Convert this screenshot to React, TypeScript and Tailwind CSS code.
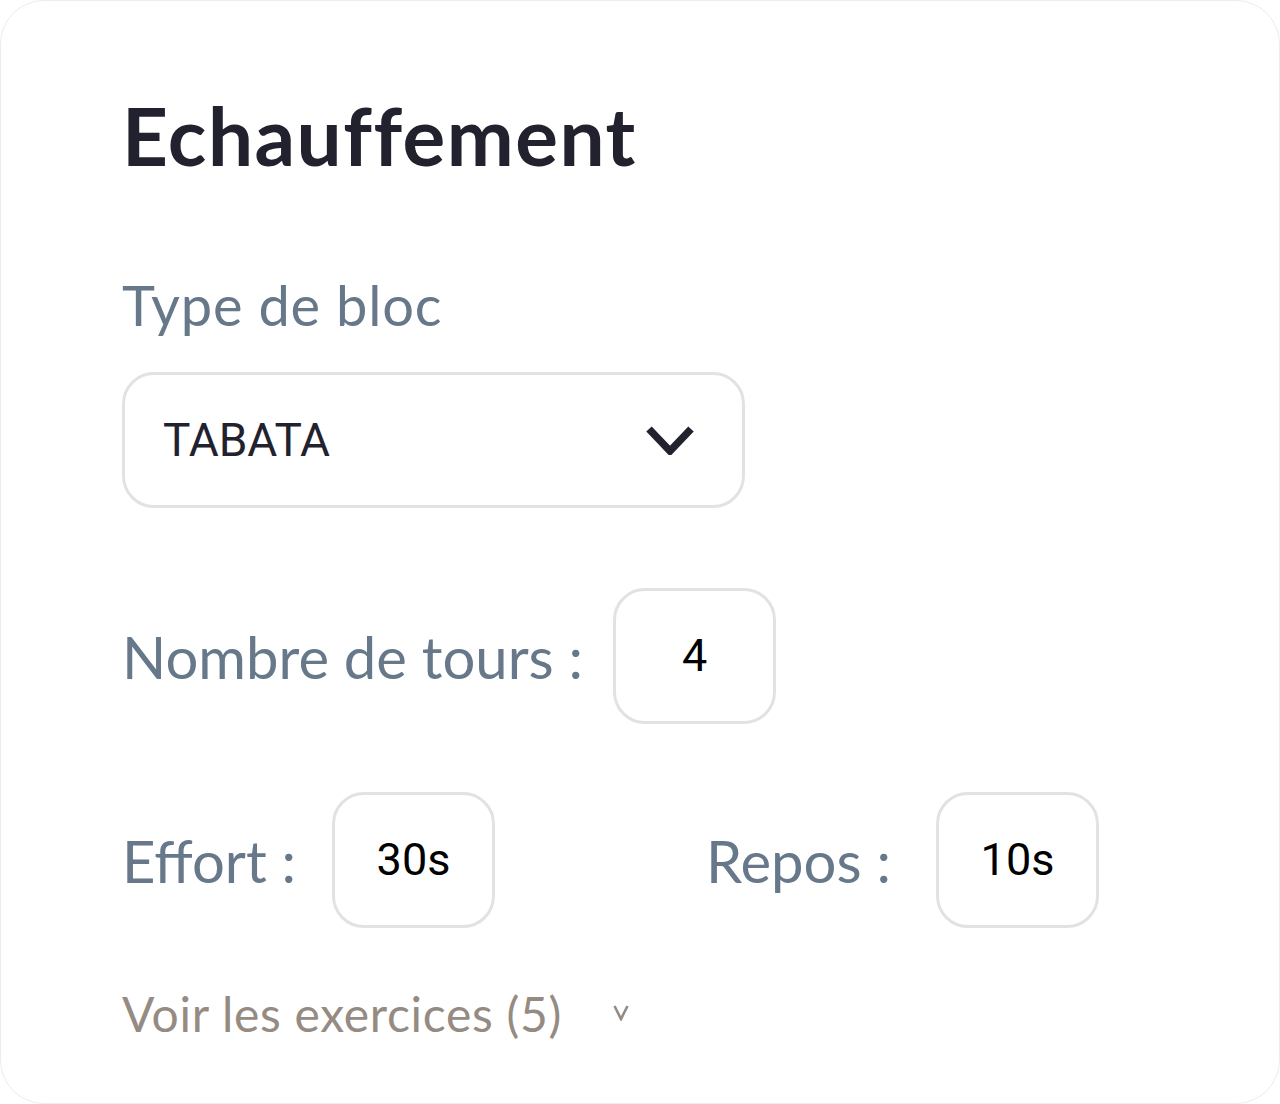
function Chevron({ className, stroke }: { className: string; stroke: number }) {
  return (
    <svg viewBox="0 0 48 30" className={className} fill="none">
      <path d="M3 4 L24 26 L45 4" stroke="currentColor" strokeWidth={stroke} strokeLinecap="butt" strokeLinejoin="miter" />
    </svg>
  );
}

function ValueBox({ value }: { value: string }) {
  return (
    <div className="flex h-[136px] w-[163px] items-center justify-center rounded-[32px] border-[3px] border-[#e2e2e2] bg-white font-['Roboto',sans-serif] text-[45px] text-black">
      {value}
    </div>
  );
}

export default function App() {
  return (
    <div className="h-[1104px] w-[1280px] bg-white">
      <div className="h-full w-full rounded-[44px] border border-[#ececec] bg-white pl-[121px] pt-[94px] font-['Lato',sans-serif]">
        <h1 className="text-[80px] font-bold leading-[80px] tracking-[1.5px] text-[#22222f]">Echauffement</h1>

        <p className="mt-[100px] text-[56px] leading-[60px] tracking-[0.8px] text-[#66788a]">Type de bloc</p>

        <div className="mt-[37px] flex h-[136px] w-[623px] items-center justify-between rounded-[32px] border-[3px] border-[#e2e2e2] pl-[38px] pr-[48px]">
          <span className="font-['Roboto',sans-serif] text-[46px] text-[#22222f]">TABATA</span>
          <Chevron className="h-[30px] w-[48px] text-[#22222f]" stroke={7.5} />
        </div>

        <div className="mt-[80px] flex items-center gap-[30px]">
          <span className="text-[58px] text-[#66788a]">Nombre de tours :</span>
          <ValueBox value="4" />
        </div>

        <div className="mt-[68px] flex items-center">
          <span className="w-[210px] text-[58px] text-[#66788a]">Effort :</span>
          <ValueBox value="30s" />
          <span className="ml-[211px] w-[230px] text-[58px] text-[#66788a]">Repos :</span>
          <ValueBox value="10s" />
        </div>

        <div className="mt-[50px] flex items-center gap-[50px]">
          <span className="text-[48px] tracking-[0.7px] text-[#958b82]">Voir les exercices (5)</span>
          <svg viewBox="0 0 18 18" className="mt-[-4px] h-[18px] w-[18px] text-[#958b82]" fill="none">
            <path d="M2.5 3 L9 16 L15.5 3" stroke="currentColor" strokeWidth={2.6} />
          </svg>
        </div>
      </div>
    </div>
  );
}
